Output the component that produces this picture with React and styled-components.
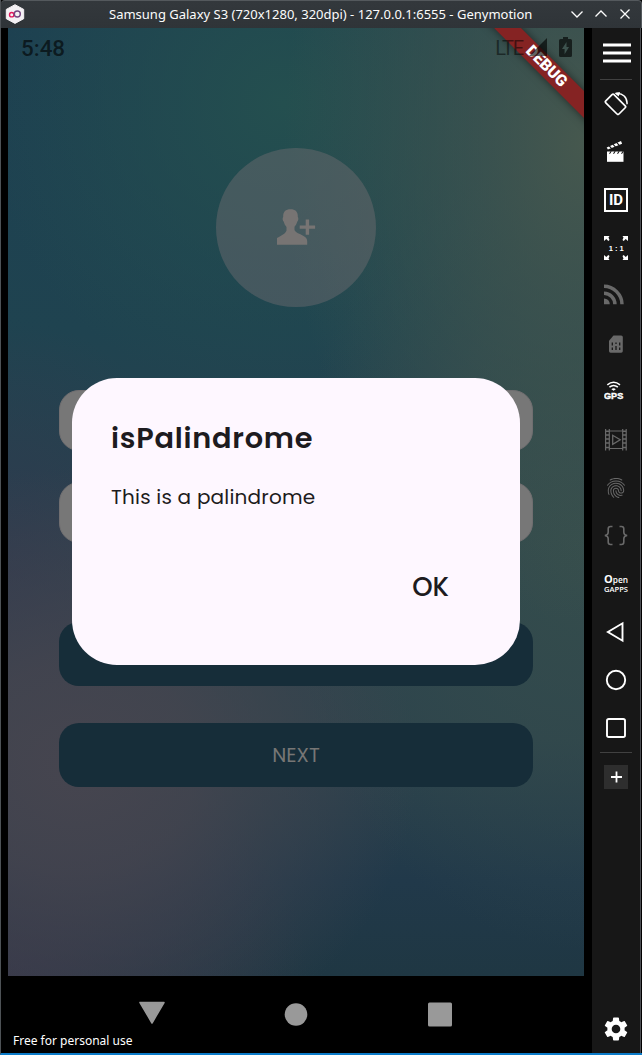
import React from 'react';
import styled, { createGlobalStyle } from 'styled-components';
import { MdFingerprint } from 'react-icons/md';

const GlobalStyle = createGlobalStyle`
  * { box-sizing: border-box; }
  body { margin: 0; background: #000; font-family: "Noto Sans", sans-serif; }
  svg { display: block; flex: none; }
`;

const Window = styled.div`
  width: 642px;
  height: 1055px;
  display: flex;
  flex-direction: column;
  background: #000;
  border-left: 1px solid #4d5256;
  border-bottom: 2px solid #0b7bc8;
  overflow: hidden;
`;

const TitleBar = styled.header`
  height: 28px;
  flex: none;
  display: grid;
  grid-template-columns: 60px 1fr 71px;
  align-items: center;
  background: linear-gradient(#33383c, #2f3438);
  border-top: 1px solid #54595d;
  border-right: 1px solid #54595d;
  border-radius: 4px 4px 0 0;
  color: #fcfcfc;
`;

const AppLogo = styled.div`
  padding: 0 0 1px 4px;
`;

const WindowTitle = styled.div`
  padding: 0 0 2px 48px;
  font-size: 13px;
  line-height: 24px;
  white-space: nowrap;
`;

const WindowControls = styled.div`
  display: flex;
  gap: 10px;
  padding-bottom: 1px;
`;

const Body = styled.div`
  flex: 1;
  display: flex;
  min-height: 0;
`;

const Device = styled.main`
  width: 591px;
  display: flex;
  flex-direction: column;
  padding-left: 7px;
`;

const Screen = styled.section`
  position: relative;
  width: 576px;
  height: 948px;
  flex: none;
  overflow: hidden;
  background:
    radial-gradient(ellipse 300px 480px at 100% 12%, #46584e 0%, rgba(69, 87, 78, 0.65) 35%, rgba(69, 87, 78, 0) 100%),
    radial-gradient(ellipse 340px 300px at 12% 78%, #46454f 0%, rgba(70, 69, 79, 0.8) 35%, rgba(70, 69, 79, 0) 100%),
    radial-gradient(ellipse 300px 300px at 48% 8%, #244f4f 0%, rgba(36, 79, 79, 0) 100%),
    radial-gradient(ellipse 300px 400px at 100% 55%, rgba(54, 78, 76, 0.9) 0%, rgba(54, 78, 76, 0) 100%),
    radial-gradient(ellipse 300px 240px at 0% 100%, rgba(54, 54, 73, 0.9) 0%, rgba(54, 54, 73, 0) 100%),
    radial-gradient(ellipse 200px 260px at 0% 58%, rgba(46, 57, 78, 0.9) 0%, rgba(46, 57, 78, 0) 100%),
    linear-gradient(180deg, #1d4051 0%, #1f4350 32%, #2b434e 55%, #2d434c 75%, #21394a 90%, #1f3743 100%);
`;

const StatusBar = styled.div`
  position: relative;
  z-index: 2;
  height: 40px;
  padding: 0 7.5px 0 13px;
  display: flex;
  align-items: center;
  justify-content: space-between;
  color: rgba(0, 0, 0, 0.62);
  font-family: Roboto, sans-serif;
`;

const Clock = styled.div`
  font-size: 22.4px;
  font-weight: 500;
`;

const StatusIcons = styled.div`
  display: flex;
  align-items: center;
`;

const Network = styled.span`
  font-size: 20px;
  letter-spacing: -1.2px;
  margin-right: -1.5px;
  color: rgba(0, 0, 0, 0.5);
`;

const Banner = styled.div`
  position: absolute;
  z-index: 1;
  left: 457.8px;
  top: 28.6px;
  width: 160px;
  height: 19.2px;
  transform: rotate(45deg);
  background: #852323;
  box-shadow: 0 0 9px rgba(0, 0, 0, 0.5);
  color: #fff;
  font: 900 15.9px/18.6px Roboto, sans-serif;
  text-align: center;
`;

const Form = styled.div`
  display: flex;
  flex-direction: column;
  padding: 79.5px 51px 0;
`;

const Avatar = styled.div`
  align-self: center;
  width: 159.5px;
  height: 159.5px;
  border-radius: 50%;
  margin-bottom: 82.5px;
  display: grid;
  place-items: center;
  background: rgba(119, 113, 116, 0.42);
`;

const Field = styled.div`
  height: 61.5px;
  border-radius: 20px;
  background: #777;
  border: 1px solid #706e70;
  margin-bottom: ${(p) => p.$gap}px;
`;

const PhoneButton = styled.button`
  height: 64px;
  padding: 0;
  border: 0;
  border-radius: 20px;
  margin-bottom: 37px;
  background: #162d39;
  color: #777675;
  font: 400 20px/62px Poppins, Lato, sans-serif;
`;

const Dialog = styled.div`
  position: absolute;
  z-index: 3;
  left: 64px;
  top: 350px;
  width: 448px;
  height: 286.5px;
  border-radius: 45px;
  background: #fef7ff;
  color: #1d1b20;
  padding: 40px 71px 0 39px;
  display: flex;
  flex-direction: column;
  font-family: Poppins, Inter, sans-serif;
`;

const DialogTitle = styled.h1`
  margin: 0 0 19px;
  font-size: 28.8px;
  line-height: 41px;
  font-weight: 600;
  letter-spacing: 0.75px;
  white-space: nowrap;
`;

const DialogText = styled.p`
  margin: 0;
  font-size: 20px;
  line-height: 38px;
  letter-spacing: 0.2px;
  white-space: nowrap;
`;

const DialogAction = styled.button`
  align-self: flex-end;
  margin-top: 51px;
  padding: 0;
  border: 0;
  background: none;
  color: inherit;
  font: 500 26px/40px Poppins, Inter, sans-serif;
`;

const NavBar = styled.nav`
  height: 77px;
  display: flex;
  flex-direction: column;
  justify-content: space-between;
`;

const NavKeys = styled.div`
  width: 576px;
  padding: 24px 130px 0;
  display: flex;
  justify-content: space-between;
`;

const License = styled.div`
  padding: 0 0 4px 5px;
  color: #fff;
  font-size: 12px;
  line-height: 17px;
`;

const Toolbar = styled.aside`
  width: 49px;
  display: flex;
  flex-direction: column;
  align-items: center;
  background: #171717;
  border-right: 1px solid #4c4e53;
`;

const Tool = styled.div`
  width: 48px;
  height: ${(p) => p.$height || 48}px;
  flex: none;
  display: grid;
  place-items: center;
  color: ${(p) => (p.$dim ? '#696969' : '#fff')};
`;

const Rule = styled.div`
  width: 32px;
  height: 1px;
  flex: none;
  background: #414141;
`;

const AddTool = styled.div`
  width: 24px;
  height: 24px;
  display: grid;
  place-items: center;
  background: #2e2e2e;
`;

const Spacer = styled.div`
  flex: 1;
`;

const Icon = ({ size = 24, w = size, h = size, children, ...rest }) => (
  <svg width={w} height={h} viewBox={`0 0 ${w} ${h}`} fill="none" {...rest}>
    {children}
  </svg>
);

const stroke = { stroke: 'currentColor', fill: 'none' };

const icons = {
  menu: (
    <Icon w={30} h={25}>
      <path d="M2 4h28M2 12h28M2 20h28" stroke="currentColor" strokeWidth="2.800" />
    </Icon>
  ),
  rotate: (
    <Icon>
      <rect x="5.7" y="3" width="11.6" height="18.6" rx="1.4" transform="rotate(-45 11.5 12.3)" {...stroke} strokeWidth="1.700" />
      <path d="M12 1.500C18.500 .6 23.600 5.600 23 12.300" {...stroke} strokeWidth="1.500" />
      <path d="M10.500 1l5.500-1-1.300 4.600z" fill="currentColor" />
    </Icon>
  ),
  clapper: (
    <Icon>
      <path d="M3 11.500h16.500v10.300H3z" fill="currentColor" />
      <path d="M2.700 7.600L17 1l1.100 2.700L3.900 9.400z" fill="currentColor" />
      <path d="M5.200 5.900l2.700 3M8.900 4.200l2.700 3M12.600 2.400l2.700 3" stroke="#171717" strokeWidth="1.100" />
      <path d="M5.500 13.700l1.700-2.400M9.500 13.700l1.700-2.400M13.500 13.700l1.700-2.400M17.500 13.700l1.700-2.400" stroke="#171717" strokeWidth="1.100" />
    </Icon>
  ),
  id: (
    <Icon>
      <rect x="1" y="1" width="22" height="22" {...stroke} strokeWidth="2" />
      <text x="12" y="17.300" textAnchor="middle" fill="currentColor" fontFamily="Roboto" fontSize="15" fontWeight="700">ID</text>
    </Icon>
  ),
  scale: (
    <Icon>
      <path
        d="M0 0h5.500L4.500 1.500 5.500 4 4.300 5 2.300 3 0 5zM24 0h-5.500l1 1.500-1 2.500 1.200 1 2-2L24 5zM0 24h5.500l-1-1.500 1-2.500-1.200-1-2 2L0 19zM24 24h-5.500l1-1.500-1-2.500 1.200-1 2 2 2.300-2z"
        fill="currentColor"
      />
      <text x="12.3" y="14.800" textAnchor="middle" fill="currentColor" fontFamily="Liberation Sans" fontSize="7.500" fontWeight="700">1 : 1</text>
    </Icon>
  ),
  rss: (
    <Icon>
      <path d="M0 18v-3.600a5.800 5.800 0 0 1 5.800 5.800H0z" fill="currentColor" />
      <path d="M0 9.300C6 9.300 10.900 14.200 10.900 20.200M0 2.200C9.600 2.200 18 10.700 18 20.200" {...stroke} strokeWidth="3.500" />
    </Icon>
  ),
  sim: (
    <Icon>
      <path d="M5 8.800L9.500 3.500h7.700q1.600 0 1.600 1.600v14q0 1.600-1.600 1.600H6.600Q5 20.700 5 19.100z" fill="currentColor" />
      <path d="M8.300 10.500v3M15.700 10.500v3M8.300 15.500v2.500M12 14v4M15.700 15.500v2.500M12 10.500v1.500" stroke="#171717" strokeWidth="1.300" />
    </Icon>
  ),
  gps: (
    <Icon>
      <path d="M3.300 4.900Q9.600 -.3 16 4.900M5.400 7.200Q9.600 3.700 13.900 7.200" {...stroke} strokeWidth="1.500" />
      <path d="M7.400 9.200q2.200-1.700 4.400 0L9.600 10.800z" fill="currentColor" />
      <text x="0" y="18.900" textLength="19.200" lengthAdjust="spacingAndGlyphs" fill="currentColor" stroke="currentColor" strokeWidth=".4" fontFamily="Liberation Sans" fontSize="8.800" fontWeight="700">GPS</text>
    </Icon>
  ),
  film: (
    <Icon>
      <path d="M1.600 1v21.500M5.300 1v21.500M18.700 1v21.500M22.200 1v21.500M5 3h14M5 20.500h14" {...stroke} strokeWidth="1.200" />
      <path d="M1.600 3.200h3.700M1.600 7h3.700M1.600 11h3.700M1.600 15h3.700M1.600 19.500h3.700M18.700 3.200h3.500M18.700 7h3.500M18.700 11h3.500M18.700 15h3.500M18.700 19.500h3.500" {...stroke} strokeWidth="1.600" />
      <path d="M8.700 7.300v9l7.500-4.500z" {...stroke} strokeWidth="1.300" />
    </Icon>
  ),
  fingerprint: <MdFingerprint size={24} />,
  braces: (
    <Icon>
      <path
        d="M8.500 2.500H6.500Q4.200 2.500 4.200 4.800v3.500q0 2.900-3.400 3.200 3.400.3 3.400 3.200v3.300q0 2.500 2.300 2.500h2M15.500 2.500h2q2.300 0 2.300 2.300v3.500q0 2.900 3.400 3.200-3.400.3-3.400 3.200v3.300q0 2.500-2.300 2.500h-2"
        {...stroke}
        strokeWidth="1.600"
      />
    </Icon>
  ),
  gapps: (
    <Icon w={26} h={32}>
      <text x="1" y="15.200" fill="currentColor" fontFamily="Open Sans" fontSize="11" fontWeight="700">O</text>
      <text x="9.800" y="15.200" fill="currentColor" fontFamily="Open Sans" fontSize="9.500" fontWeight="600" textLength="15.200" lengthAdjust="spacingAndGlyphs">pen</text>
      <text x="1" y="24" fill="currentColor" fontFamily="Open Sans" fontSize="7" fontWeight="600" textLength="24" lengthAdjust="spacingAndGlyphs">GAPPS</text>
    </Icon>
  ),
  back: (
    <Icon>
      <path d="M18.500 3.300v17.400L3.900 12z" {...stroke} strokeWidth="1.900" />
    </Icon>
  ),
  home: (
    <Icon>
      <circle cx="12" cy="12" r="9.200" {...stroke} strokeWidth="1.900" />
    </Icon>
  ),
  recent: (
    <Icon>
      <rect x="3" y="3" width="18" height="18" rx="1.800" {...stroke} strokeWidth="1.900" />
    </Icon>
  ),
  gear: (
    <Icon>
      <path
        fill="currentColor"
        transform="translate(-2.400 -2.400) scale(1.200)"
        d="M19.140 12.940c.04-.3.06-.61.06-.94s-.02-.64-.07-.94l2.030-1.580a.49.49 0 0 0 .12-.61l-1.920-3.320a.49.49 0 0 0-.59-.22l-2.390.96c-.5-.38-1.030-.7-1.620-.94L14.400 2.810a.48.48 0 0 0-.48-.41h-3.840a.47.47 0 0 0-.47.41L9.250 5.350c-.59.24-1.130.57-1.620.94l-2.390-.96a.48.48 0 0 0-.59.22L2.740 8.870a.47.47 0 0 0 .12.61l2.030 1.580c-.05.3-.09.63-.09.94s.02.64.07.94l-2.030 1.580a.49.49 0 0 0-.12.61l1.920 3.320c.12.22.37.290.59.22l2.390-.96c.5.38 1.030.7 1.620.94l.36 2.540c.05.24.24.41.48.41h3.840c.24 0 .44-.17.47-.41l.36-2.540c.59-.24 1.130-.56 1.620-.94l2.390.96c.22.080.47 0 .59-.22l1.920-3.320a.47.47 0 0 0-.12-.61zM12 15.600a3.600 3.600 0 1 1 0-7.200 3.600 3.600 0 0 1 0 7.200z"
      />
    </Icon>
  ),
};

const tools = [
  { name: 'rotate' },
  { name: 'clapper' },
  { name: 'id' },
  { name: 'scale' },
  { name: 'rss', dim: true },
  { name: 'sim', dim: true },
  { name: 'gps' },
  { name: 'film', dim: true },
  { name: 'fingerprint', dim: true },
  { name: 'braces', dim: true },
  { name: 'gapps' },
  { name: 'back' },
  { name: 'home' },
  { name: 'recent' },
];

const control = { stroke: '#fcfcfc', strokeWidth: 1.3 };

export default function App() {
  return (
    <>
      <GlobalStyle />
      <Window>
        <TitleBar>
          <AppLogo>
            <Icon w={20} h={20}>
              <path d="M10 .7l8.700 4.700v9.300L10 19.400 1.300 14.700V5.400z" fill="#f4f1f4" stroke="#f4f1f4" strokeLinejoin="round" />
              <circle cx="6.700" cy="10.700" r="2.200" stroke="#e3195e" strokeWidth="1.400" />
              <circle cx="12.300" cy="10" r="3" stroke="#754580" strokeWidth="1.400" />
            </Icon>
          </AppLogo>
          <WindowTitle>Samsung Galaxy S3 (720x1280, 320dpi) - 127.0.0.1:6555 - Genymotion</WindowTitle>
          <WindowControls>
            <Icon size={14}><path d="M1.500 4.500L7 10l5.500-5.500" {...control} /></Icon>
            <Icon size={14}><path d="M1.500 9.500L7 4l5.500 5.500" {...control} /></Icon>
            <Icon size={14}><path d="M2.500 2.500l9 9M11.500 2.500l-9 9" {...control} /></Icon>
          </WindowControls>
        </TitleBar>
        <Body>
          <Device>
            <Screen>
              <StatusBar>
                <Clock>5:48</Clock>
                <StatusIcons>
                  <Network>LTE</Network>
                  <Icon w={26} h={24}><path d="M25 2v18H7z" fill="currentColor" /></Icon>
                  <Icon w={22} h={24} style={{ marginLeft: 7 }}>
                    <path fillRule="evenodd" fill="currentColor" d="M8 1h5v2h2.500q1.500 0 1.500 1.500v15q0 1.500-1.500 1.500h-10Q4 21 4 19.500v-15Q4 3 5.500 3H8zM11.500 6L7 13h2.600v5.200L14 11h-2.500z" />
                  </Icon>
                </StatusIcons>
              </StatusBar>
              <Banner>DEBUG</Banner>
              <Form>
                <Avatar>
                  <Icon w={40} h={38}>
                    <g fill="#777473">
                      <path d="M14.500 1.300c4.700 0 7.600 2.400 7.300 7.500.9 1.300.7 3.900-.6 5-.6 2.200-1.600 3.900-2.700 5v3.300c.8 2.400 4.500 3.600 8.200 5.300 3.200 1.400 4.500 3.200 4.500 5.800v3.500H1V30c5.500-3.300 8.500-4.500 9.500-7.600v-3.500c-1.200-1.200-2.200-2.900-2.700-5.100-1.300-1.100-1.500-3.700-.6-5-.300-5.100 2.600-7.500 7.300-7.500z" />
                      <path d="M29.700 11.500h3.400v6h6v3.300h-6v6h-3.400v-6h-6v-3.300h6z" />
                    </g>
                  </Icon>
                </Avatar>
                <Field $gap={30.500} />
                <Field $gap={78.500} />
                <PhoneButton aria-label="Check" />
                <PhoneButton>NEXT</PhoneButton>
              </Form>
              <Dialog>
                <DialogTitle>isPalindrome</DialogTitle>
                <DialogText>This is a palindrome</DialogText>
                <DialogAction>OK</DialogAction>
              </Dialog>
            </Screen>
            <NavBar>
              <NavKeys>
                <Icon w={28} h={30}><path d="M2 2.500h24L14 23z" fill="#999" stroke="#999" strokeWidth="1.500" strokeLinejoin="round" /></Icon>
                <Icon w={28} h={30}><circle cx="14" cy="14.500" r="11.300" fill="#999" /></Icon>
                <Icon w={28} h={30}><rect x="2" y="2.500" width="24" height="24" rx="1.500" fill="#999" /></Icon>
              </NavKeys>
              <License>Free for personal use</License>
            </NavBar>
          </Device>
          <Toolbar>
            <Tool $height={51}>{icons.menu}</Tool>
            <Rule />
            {tools.map((t) => (
              <Tool key={t.name} $dim={t.dim}>{icons[t.name]}</Tool>
            ))}
            <Rule />
            <Tool>
              <AddTool>
                <Icon><path d="M12.500 6.500v11M7 12h11" stroke="#fff" strokeWidth="1.800" /></Icon>
              </AddTool>
            </Tool>
            <Spacer />
            <Tool>{icons.gear}</Tool>
          </Toolbar>
        </Body>
      </Window>
    </>
  );
}
